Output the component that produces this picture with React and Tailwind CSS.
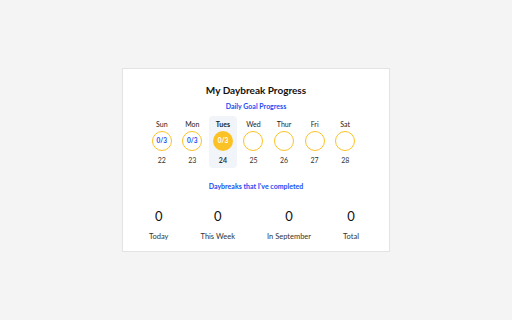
const days = [
  { name: 'Sun', date: 22, label: '0/3' },
  { name: 'Mon', date: 23, label: '0/3' },
  { name: 'Tues', date: 24, label: '0/3', today: true },
  { name: 'Wed', date: 25 },
  { name: 'Thur', date: 26 },
  { name: 'Fri', date: 27 },
  { name: 'Sat', date: 28 },
]

const stats = [
  { value: 0, label: 'Today' },
  { value: 0, label: 'This Week' },
  { value: 0, label: 'In September' },
  { value: 0, label: 'Total' },
]

export default function App() {
  return (
    <div className="min-h-[320px] w-[512px] bg-[#f4f4f4] flex justify-center pt-[68px] font-['Lato',sans-serif]">
      <div className="w-[268px] h-[184px] bg-white border border-[#e3e3e3] flex flex-col items-center">
        <h1 className="pt-[15px] text-[10px] leading-[13px] font-bold text-[#111]">My Daybreak Progress</h1>
        <div className="mt-[4px] text-[7px] leading-[10px] font-bold text-[#1a4df2]">Daily Goal Progress</div>

        <div className="mt-[5px] grid grid-cols-7 w-[214px] mr-[5px]">
          {days.map((d) => (
            <div
              key={d.name}
              className={`flex flex-col items-center h-[52px] pt-[4px] mx-[1px] rounded-sm ${d.today ? 'bg-[#f1f4f8]' : ''}`}
            >
              <span className={`text-[7px] leading-[9px] text-[#222] ${d.today ? 'font-bold' : ''}`}>{d.name}</span>
              <div
                className={`mt-[2px] w-5 h-5 rounded-full flex items-center justify-center ${
                  d.today ? 'bg-[#fbc226]' : 'border-[1.5px] border-[#fbc226] bg-white'
                }`}
              >
                {d.label && (
                  <span className={`text-[6.5px] font-bold leading-none ${d.today ? 'text-white' : 'text-[#1a4df2]'}`}>
                    {d.label}
                  </span>
                )}
              </div>
              <span className={`mt-[5px] text-[7px] leading-[9px] text-[#333] ${d.today ? 'font-bold text-[#111]' : ''}`}>
                {d.date}
              </span>
            </div>
          ))}
        </div>

        <div className="mt-[13px] text-[7px] leading-[10px] font-bold text-[#1a4df2]">Daybreaks that I've completed</div>

        <div className="w-full flex justify-between pl-[26px] pr-[30px]">
          {stats.map((s) => (
            <div key={s.label} className="flex flex-col items-center">
              <span className="mt-[17px] text-[13px] leading-[16px] text-[#111]">{s.value}</span>
              <span className="mt-[8px] text-[7.5px] leading-[10px] text-[#333]">{s.label}</span>
            </div>
          ))}
        </div>
      </div>
    </div>
  )
}
